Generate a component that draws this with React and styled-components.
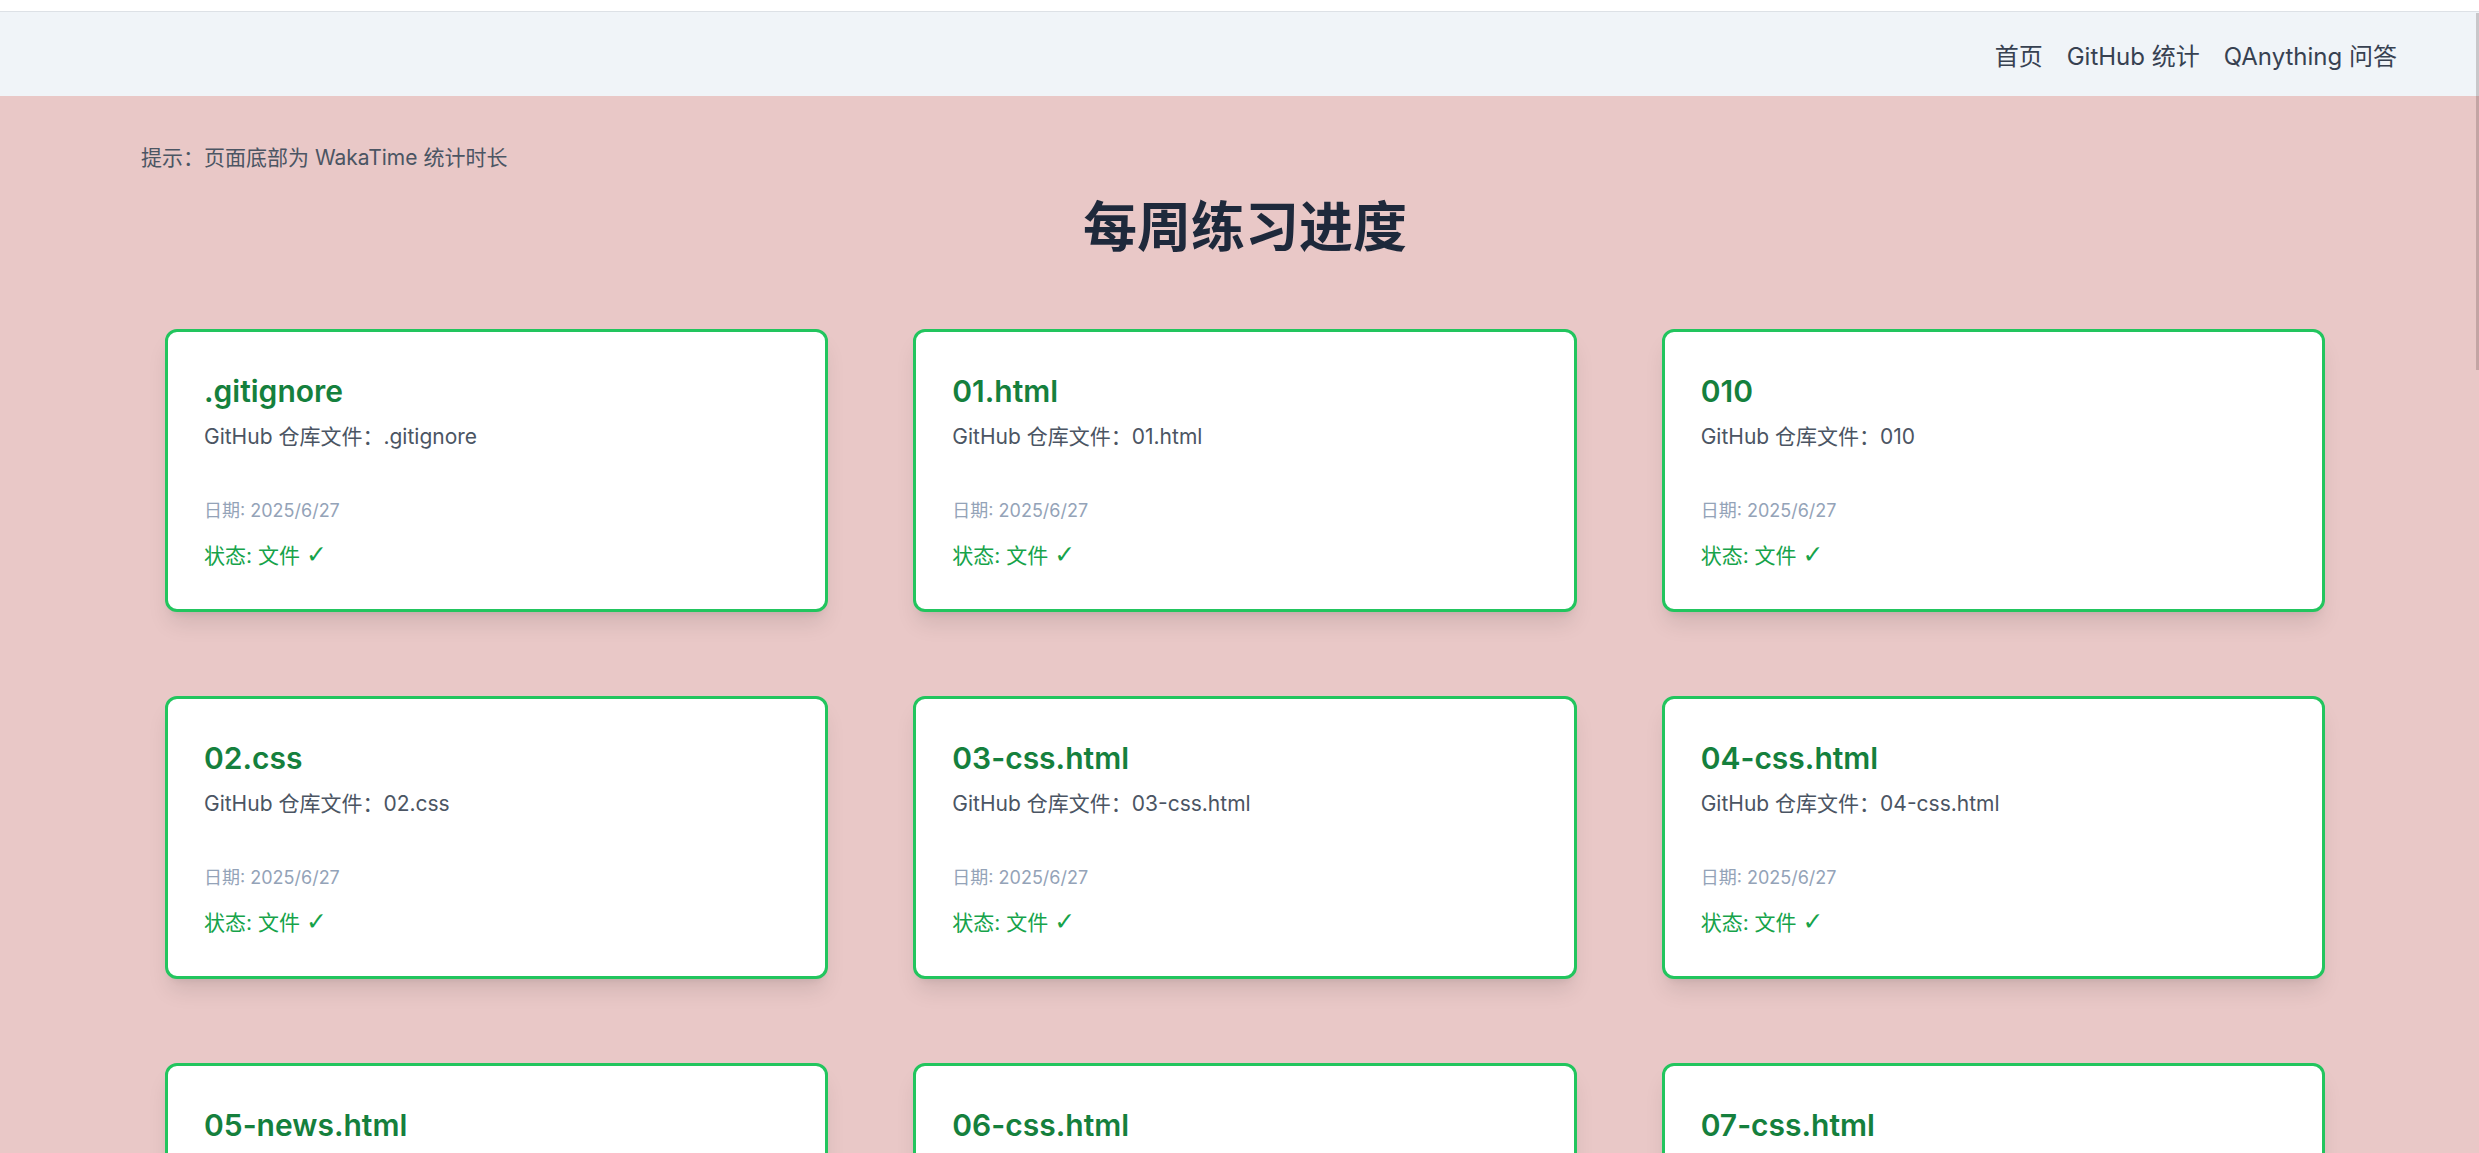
import styled, { createGlobalStyle } from "styled-components";

const files = [
  ".gitignore",
  "01.html",
  "010",
  "02.css",
  "03-css.html",
  "04-css.html",
  "05-news.html",
  "06-css.html",
  "07-css.html",
];

const GlobalStyle = createGlobalStyle`
  html, body {
    margin: 0;
    padding: 0;
    background: #ffffff;
    font-family: Inter, "Noto Sans CJK SC", sans-serif;
    scrollbar-width: none;
  }
  body::-webkit-scrollbar {
    display: none;
  }
  * {
    box-sizing: border-box;
  }
`;

const Page = styled.div`
  padding-top: 11px;
  min-height: 100vh;
  display: flex;
  flex-direction: column;
`;

const Header = styled.header`
  height: 85px;
  border-top: 1px solid #dde1e6;
  background: #f0f4f8;
  display: flex;
  justify-content: flex-end;
  align-items: center;
  gap: 24px;
  padding-right: 82px;
`;

const NavLink = styled.a`
  font-size: 24px;
  color: #374151;
  text-decoration: none;
  cursor: pointer;
`;

const Main = styled.main`
  flex: 1;
  background: #e9c8c7;
  padding: 46px 130px 60px 141px;
`;

const Hint = styled.p`
  margin: 0;
  font-size: 21px;
  line-height: 31.5px;
  color: #4b5563;
`;

const Heading = styled.h1`
  margin: 21px 0 0;
  text-align: center;
  font-size: 54px;
  line-height: 65px;
  font-weight: 700;
  color: #1e293b;
`;

const Grid = styled.div`
  margin: 69px 24px 0;
  display: grid;
  grid-template-columns: repeat(3, 1fr);
  column-gap: 85px;
  row-gap: 84px;
`;

const Card = styled.div`
  background: #ffffff;
  border: 3px solid #22c55e;
  border-radius: 12px;
  padding: 37px 36px 37px;
  display: flex;
  flex-direction: column;
  box-shadow: 0 15px 22px -4px rgba(0, 0, 0, 0.1),
    0 6px 9px -6px rgba(0, 0, 0, 0.1);
`;

const Title = styled.h2`
  margin: 0;
  font-size: 30px;
  line-height: 45px;
  font-weight: 600;
  color: #15803d;
`;

const Desc = styled.p`
  margin: 7px 0 0;
  font-size: 21px;
  line-height: 31.5px;
  color: #4b5563;
`;

const DateLine = styled.p`
  margin: 45px 0 0;
  font-size: 18px;
  line-height: 27px;
  color: #94a3b8;
`;

const Status = styled.p`
  margin: 16px 0 0;
  font-size: 21px;
  line-height: 31.5px;
  color: #16a34a;
`;

const Check = styled.span`
  font-family: "DejaVu Sans", sans-serif;
  font-size: 25px;
  line-height: 1;
`;

const ScrollThumb = styled.div`
  position: fixed;
  top: 13px;
  right: 0;
  width: 3px;
  height: 357px;
  background: rgba(60, 40, 40, 0.22);
`;

const FileCard = ({ name }) => (
  <Card>
    <Title>{name}</Title>
    <Desc>GitHub 仓库文件：{name}</Desc>
    <DateLine>日期: 2025/6/27</DateLine>
    <Status>
      状态: 文件 <Check>✓</Check>
    </Status>
  </Card>
);

const App = () => {
  return (
    <Page>
      <GlobalStyle />
      <Header>
        <NavLink>首页</NavLink>
        <NavLink>GitHub 统计</NavLink>
        <NavLink>QAnything 问答</NavLink>
      </Header>
      <Main>
        <Hint>提示：页面底部为 WakaTime 统计时长</Hint>
        <Heading>每周练习进度</Heading>
        <Grid>
          {files.map((f) => (
            <FileCard key={f} name={f} />
          ))}
        </Grid>
      </Main>
      <ScrollThumb />
    </Page>
  );
};

export default App;
